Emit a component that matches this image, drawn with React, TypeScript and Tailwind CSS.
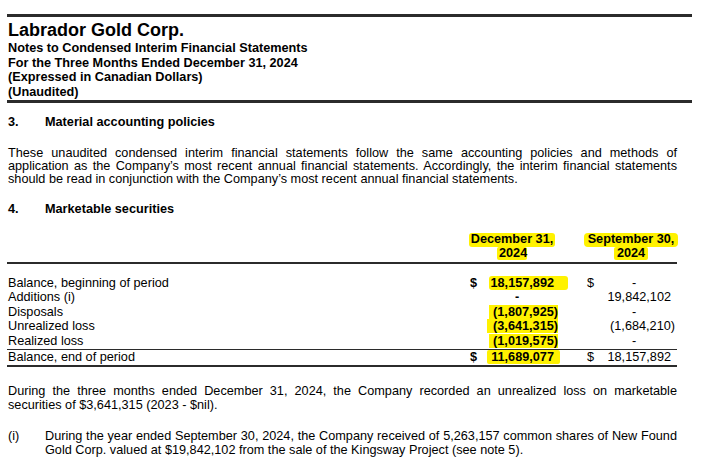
const HL = 'bg-[#fff200]';

type Row = {
  label: string;
  d1?: boolean;
  v1: string;
  d2?: boolean;
  v2: string;
};

const rows: Row[] = [
  { label: 'Balance, beginning of period', d1: true, v1: '18,157,892', d2: true, v2: '-' },
  { label: 'Additions (i)', v1: '-', v2: '19,842,102' },
  { label: 'Disposals', v1: '(1,807,925)', v2: '-' },
  { label: 'Unrealized loss', v1: '(3,641,315)', v2: '(1,684,210)' },
  { label: 'Realized loss', v1: '(1,019,575)', v2: '-' },
];

function Num({ value, bold, hl }: { value: string; bold?: boolean; hl?: string }) {
  const isDash = value === '-';
  const isNeg = value.startsWith('(');
  if (isDash) {
    return <div className={`text-center pr-[6px] ${bold ? 'font-bold' : ''}`}>-</div>;
  }
  return (
    <div className={`text-right whitespace-nowrap ${isNeg ? '' : 'pr-[4px]'} ${bold ? 'font-bold' : ''}`}>
      {hl ? <span className={hl}>{value}</span> : value}
    </div>
  );
}

export default function App() {
  return (
    <div
      className="w-[709px] h-[466px] overflow-hidden bg-white text-black pl-[7px] pt-[14px]"
      style={{ fontFamily: '"Liberation Sans", Arial, sans-serif' }}
    >
      {/* Report header */}
      <div className="w-[685px] border-t-[3px] border-b-[3px] border-[#2b2b2b] pl-[1px] pt-[2px] pb-[1px]">
        <div className="text-[18px] leading-[22px] font-bold">Labrador Gold Corp.</div>
        <div className="text-[12.7px] leading-[14.5px] font-bold">
          <div>Notes to Condensed Interim Financial Statements</div>
          <div>For the Three Months Ended December 31, 2024</div>
          <div>(Expressed in Canadian Dollars)</div>
          <div>(Unaudited)</div>
        </div>
      </div>

      <div className="w-[670px] text-[12.7px]">
        {/* Note 3 */}
        <div className="flex font-bold leading-[14px] mt-[12px] pl-[1px]">
          <span className="w-[37px]">3.</span>
          <span>Material accounting policies</span>
        </div>
        <p className="mt-[18px] pl-[1px] leading-[13px] text-justify">
          These unaudited condensed interim financial statements follow the same accounting policies and methods of
          application as the Company’s most recent annual financial statements. Accordingly, the interim financial
          statements should be read in conjunction with the Company’s most recent annual financial statements.
        </p>

        {/* Note 4 */}
        <div className="flex font-bold leading-[14px] mt-[16px] pl-[1px]">
          <span className="w-[37px]">4.</span>
          <span>Marketable securities</span>
        </div>

        {/* Table */}
        <div className="mt-[17px]">
          <div className="flex border-b-2 border-[#2b2b2b] pb-[2px] font-bold leading-[13.5px] whitespace-nowrap">
            <div className="w-[463px]" />
            <div className="w-[88px] pr-[4px] flex flex-col items-center">
              <span className={`${HL} px-[2px] rounded-[3px]`}>December 31,</span>
              <span className={`${HL} px-[2px] rounded-[2px] w-[30px] text-center`}>2024</span>
            </div>
            <div className="w-[29px]" />
            <div className="w-[88px] flex flex-col items-center">
              <span className={`${HL} px-[4px] rounded-[4px]`}>September 30,</span>
              <span className={`${HL} px-[3px] rounded-[2px]`}>2024</span>
            </div>
          </div>

          <div className="pt-[11.5px] pb-[1px] leading-[14.5px]">
            {rows.map((r, i) => (
              <div key={r.label} className="flex">
                <div className="w-[463px] pl-[1px]">{r.label}</div>
                <div className="w-[12px] font-bold">{r.d1 ? '$' : ''}</div>
                <div className="w-[76px]">
                  <Num
                    value={r.v1}
                    bold
                    hl={
                      i === 0
                        ? `${HL} pl-[2px] pr-[14px] -mr-[14px] rounded-[3px]`
                        : r.v1 !== '-'
                        ? `${HL} pl-[4px] ${i === 3 ? '-ml-[6px] pl-[6px]' : ''}`
                        : undefined
                    }
                  />
                </div>
                <div className="w-[29px]" />
                <div className="w-[12px]">{r.d2 ? '$' : ''}</div>
                <div className="w-[76px]">
                  <Num value={r.v2} />
                </div>
              </div>
            ))}
          </div>

          <div className="flex border-t border-b-2 border-[#2b2b2b] leading-[15px]">
            <div className="w-[463px] pl-[1px]">Balance, end of period</div>
            <div className="w-[12px] font-bold">$</div>
            <div className="w-[76px]">
              <Num value="11,689,077" bold hl={`${HL} pl-[4px] pr-[6px] -mr-[6px] rounded-[2px]`} />
            </div>
            <div className="w-[29px]" />
            <div className="w-[12px]">$</div>
            <div className="w-[76px]">
              <Num value="18,157,892" />
            </div>
          </div>
        </div>

        <p className="mt-[17px] pl-[1px] leading-[14px] text-justify">
          During the three months ended December 31, 2024, the Company recorded an unrealized loss on marketable
          securities of $3,641,315 (2023 - $nil).
        </p>

        <div className="flex mt-[17px] pl-[1px] leading-[14px]">
          <span className="w-[37px] shrink-0">(i)</span>
          <p className="text-justify">
            During the year ended September 30, 2024, the Company received of 5,263,157 common shares of New Found
            Gold Corp. valued at $19,842,102 from the sale of the Kingsway Project (see note 5).
          </p>
        </div>
      </div>
    </div>
  );
}
